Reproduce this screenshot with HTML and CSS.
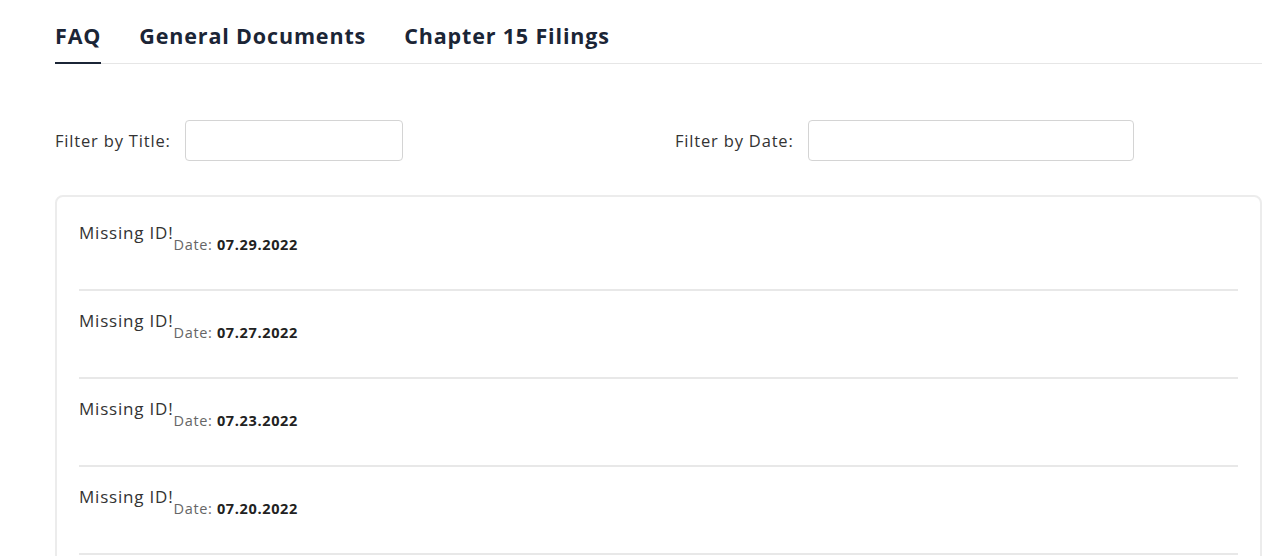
FILE: index.html
```html
<!DOCTYPE html>
<html lang="en">
<head>
<meta charset="utf-8">
<title>Documents</title>
<link rel="stylesheet" href="styles.css">
</head>
<body>
<div class="page">
  <nav class="tabs">
    <a class="tab active">FAQ</a>
    <a class="tab">General Documents</a>
    <a class="tab">Chapter 15 Filings</a>
  </nav>
  <div class="filters">
    <label class="filter filter-first">
      <span class="filter-label">Filter by Title:</span>
      <input class="filter-input filter-title" type="text">
    </label>
    <label class="filter">
      <span class="filter-label">Filter by Date:</span>
      <input class="filter-input filter-date" type="text">
    </label>
  </div>
  <div class="card">
    <div class="row"><span class="title">Missing ID!</span><span class="date">Date: <b>07.29.2022</b></span></div>
    <div class="row"><span class="title">Missing ID!</span><span class="date">Date: <b>07.27.2022</b></span></div>
    <div class="row"><span class="title">Missing ID!</span><span class="date">Date: <b>07.23.2022</b></span></div>
    <div class="row"><span class="title">Missing ID!</span><span class="date">Date: <b>07.20.2022</b></span></div>
  </div>
</div>
</body>
</html>
```
FILE: styles.css
```css
* { box-sizing: border-box; }
html, body { margin: 0; padding: 0; background: #fff; }
body {
  font-family: "Open Sans", "Liberation Sans", sans-serif;
  color: #333;
  height: 556px;
  overflow: hidden;
}
.page {
  margin-left: 55px;
  width: 1207px;
  padding-top: 21px;
}
.tabs {
  display: flex;
  gap: 39px;
  border-bottom: 1px solid #e6e6e6;
}
.tab {
  font-size: 21.5px;
  font-weight: 700;
  letter-spacing: 0.85px;
  color: #1b2536;
  line-height: 30px;
  padding-bottom: 11px;
  border-bottom: 2px solid transparent;
  margin-bottom: -1px;
  margin-right: -1px;
  cursor: pointer;
}
.tab.active { border-bottom-color: #1b2536; }
.filters {
  display: flex;
  margin-top: 56px;
}
.filter {
  display: flex;
  align-items: center;
  flex: none;
}
.filter-first { width: 620px; }
.filter-label {
  font-size: 16.5px;
  letter-spacing: 0.82px;
  color: #333;
  margin-right: 14px;
}
.filter-input {
  height: 41px;
  border: 1px solid #d4d4d4;
  border-radius: 4px;
  background: #fff;
  font: inherit;
}
.filter-title { width: 218px; }
.filter-date { width: 326px; }
.card {
  margin-top: 34px;
  border: 2px solid #ececec;
  border-radius: 8px;
  padding: 6px 22px 40px;
}
.row {
  height: 88px;
  border-bottom: 2px solid #e8e8e8;
  display: flex;
  align-items: flex-start;
  padding-top: 18px;
}
.title {
  font-size: 17px;
  letter-spacing: 0.8px;
  line-height: 24px;
  color: #333;
}
.date {
  font-size: 14.5px;
  letter-spacing: 0.65px;
  color: #666;
  margin-top: 14px;
  line-height: 20px;
}
.date b { color: #222; font-weight: 700; }
```
